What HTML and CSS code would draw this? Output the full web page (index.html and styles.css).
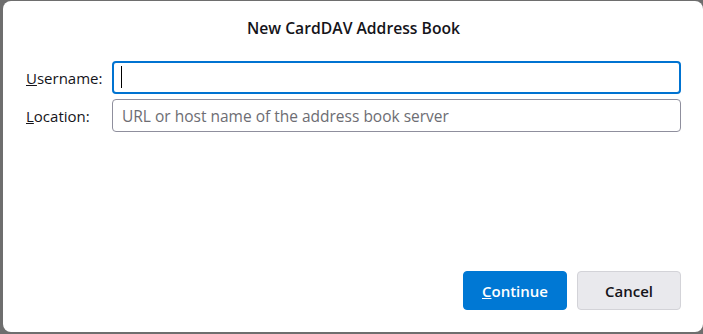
FILE: index.html
```html
<!DOCTYPE html>
<html lang="en">
<head>
  <meta charset="UTF-8" />
  <title>New CardDAV Address Book</title>
  <link rel="stylesheet" href="styles.css">
</head>
<body>
  <div class="dialog">
    <h1 class="title">New CardDAV Address Book</h1>

    <div class="form">
      <label for="username"><u>U</u>sername:</label>
      <div class="field">
        <input type="text" id="username" class="focused" />
        <span class="caret"></span>
      </div>

      <label for="location"><u>L</u>ocation:</label>
      <div class="field">
        <input type="text" id="location" placeholder="URL or host name of the address book server" />
      </div>
    </div>

    <div class="buttons">
      <button class="primary"><u>C</u>ontinue</button>
      <button>Cancel</button>
    </div>
  </div>
</body>
</html>
```

FILE: styles.css
```css
html, body {
  margin: 0;
  height: 100%;
}

body {
  background-color: #6e6e6e;
  font-family: 'Open Sans', 'Noto Sans', sans-serif;
  color: #15141a;
  overflow: hidden;
}

.dialog {
  box-sizing: border-box;
  margin: 1px 0 0 3px;
  height: 331px;
  background-color: #fff;
  border-radius: 8px;
  padding: 0 22px 22px 23px;
  display: flex;
  flex-direction: column;
}

.title {
  margin: 17px 0 0;
  font-size: 15.7px;
  font-weight: 600;
  line-height: 20px;
  text-align: center;
}

.form {
  margin-top: 23px;
  display: grid;
  grid-template-columns: 86px 1fr;
  row-gap: 5px;
  align-items: center;
}

label {
  font-size: 15px;
}

.field {
  position: relative;
}

input {
  box-sizing: border-box;
  display: block;
  width: 100%;
  height: 33px;
  padding: 0 9px;
  border: 1px solid #8f8f9d;
  border-radius: 4px;
  font-family: inherit;
  font-size: 15.5px;
  color: #15141a;
  outline: none;
}

input::placeholder {
  color: #6d6d73;
}

input.focused {
  border: 2px solid #0073d1;
}

.caret {
  position: absolute;
  left: 9px;
  top: 5px;
  width: 1px;
  height: 22px;
  background-color: #000;
}

.buttons {
  margin-top: auto;
  display: flex;
  justify-content: flex-end;
  gap: 10px;
}

button {
  width: 104px;
  height: 39px;
  border: 1px solid #d3d3d8;
  border-radius: 4px;
  background-color: #e9e9ed;
  font-family: inherit;
  font-size: 15px;
  font-weight: 600;
  color: #15141a;
}

button.primary {
  background-color: #0078d4;
  border-color: #0078d4;
  color: #fff;
}
```
